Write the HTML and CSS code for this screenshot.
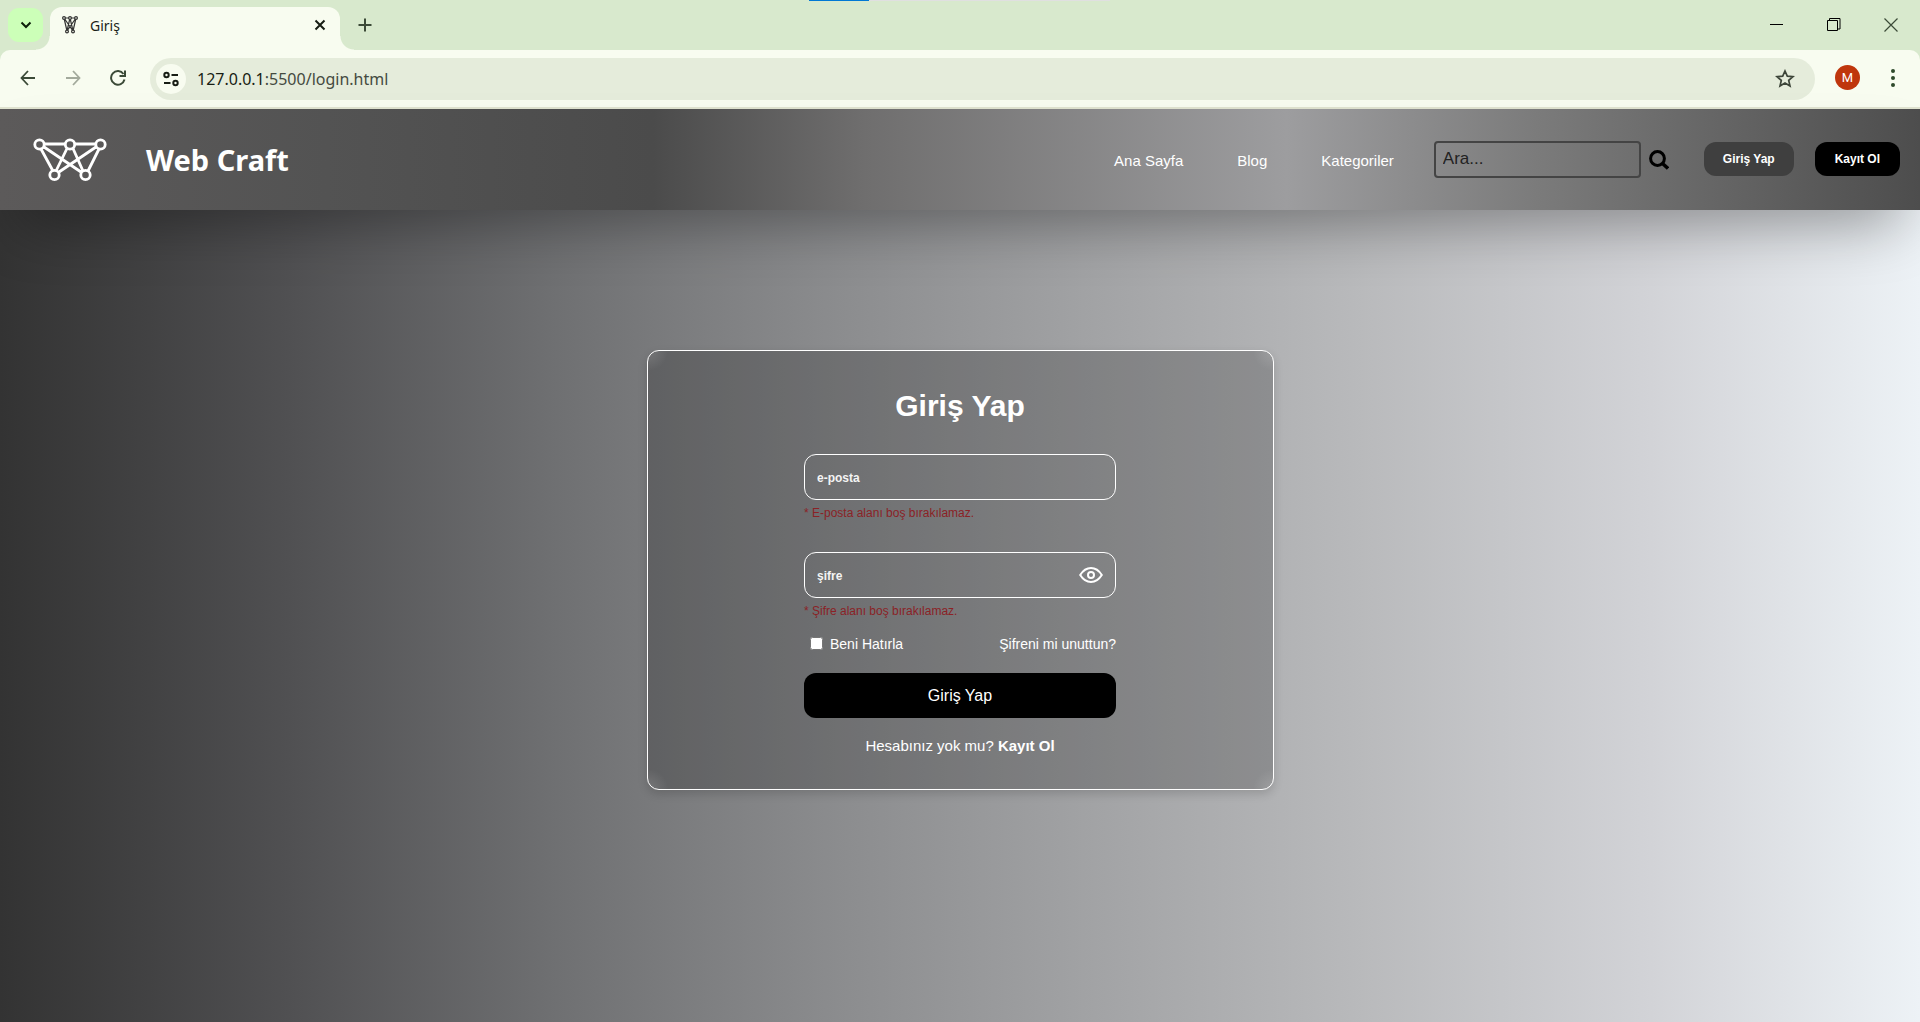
FILE: index.html
```html
<!DOCTYPE html>
<html lang="tr">
<head>
<meta charset="utf-8">
<meta name="viewport" content="width=device-width, initial-scale=1">
<title>Giriş</title>
<link rel="stylesheet" href="styles.css">
</head>
<body>
<div class="browser">
  <div class="tabstrip">
    <div class="progress"><span class="progress-bar"></span></div>
    <button class="tab-search" aria-label="Sekmelerde ara">
      <svg width="12" height="12" viewBox="0 0 12 12" fill="none" stroke="#0d1f0a" stroke-width="2"><path d="M1.500 3.500 6 8l4.500-4.500"/></svg>
    </button>
    <div class="tab">
      <svg class="favicon" width="16" height="18" viewBox="0 0 16 18" fill="none" stroke="#333" stroke-width="1.200"><path d="M2 2h12M2 2l3 13M2 2l9 13M8 2 5 15M8 2l3 13M14 2 5 15M14 2l-3 13"/><g fill="#f8fcf0"><circle cx="2" cy="2" r="1.400"/><circle cx="8" cy="2" r="1.400"/><circle cx="14" cy="2" r="1.400"/><circle cx="5" cy="15.500" r="1.400"/><circle cx="11" cy="15.500" r="1.400"/></g></svg>
      <span class="tab-title">Giriş</span>
      <button class="icon-button" aria-label="Sekmeyi kapat">
        <svg width="12" height="12" viewBox="0 0 12 12" stroke="#171d14" stroke-width="2"><path d="m1.500 1.500 9 9m0-9-9 9"/></svg>
      </button>
    </div>
    <button class="icon-button new-tab" aria-label="Yeni sekme">
      <svg width="14" height="14" viewBox="0 0 14 14" stroke="#3b4a37" stroke-width="2"><path d="M7 .5v13M.5 7h13"/></svg>
    </button>
    <div class="window-controls">
      <button class="icon-button" aria-label="Simge durumuna küçült"><svg width="14" height="14" viewBox="0 0 14 14" stroke="#000"><path d="M0 6.500h13"/></svg></button>
      <button class="icon-button" aria-label="Önceki boyut"><svg width="14" height="14" viewBox="0 0 14 14" fill="none" stroke="#000"><path d="M.5 2.500h10v10H.5zM2.500 2.500v-2h10.500v10.500h-2.500"/></svg></button>
      <button class="icon-button" aria-label="Kapat"><svg width="14" height="14" viewBox="0 0 14 14" stroke="#3b4a37" stroke-width="1.200"><path d="m.5.5 13 13m0-13-13 13"/></svg></button>
    </div>
  </div>
  <div class="toolbar">
    <div class="toolbar-nav">
      <button class="icon-button" aria-label="Geri"><svg width="16" height="16" viewBox="0 0 16 16" fill="none" stroke="#3b4a37" stroke-width="1.800"><path d="M15 8H2M8 1 1.500 8 8 15"/></svg></button>
      <button class="icon-button" aria-label="İleri"><svg width="16" height="16" viewBox="0 0 16 16" fill="none" stroke="#a3aa9c" stroke-width="1.800"><path d="M1 8h13M8 1l6.500 7L8 15"/></svg></button>
      <button class="icon-button" aria-label="Yenile"><svg width="16" height="16" viewBox="0 0 16 16" fill="none" stroke="#3b4a37" stroke-width="2"><path d="M14.500 9.500A6.800 6.800 0 1 1 13.500 4"/><path d="M15 .5v5.500H9.500"/></svg></button>
    </div>
    <div class="omnibox">
      <button class="site-info" aria-label="Site bilgileri"><svg width="16" height="16" viewBox="0 0 16 16" fill="none" stroke="#171d14" stroke-width="2"><circle cx="3.500" cy="4" r="2.200"/><path d="M8.500 4H15M1 12h6.500"/><circle cx="12.500" cy="12" r="2.200"/></svg></button>
      <p class="url"><span class="url-host">127.0.0.1</span>:5500/login.html</p>
      <button class="icon-button" aria-label="Yer işareti ekle"><svg width="20" height="19" viewBox="0 0 20 19" fill="none" stroke="#3d4539" stroke-width="1.700"><path d="m10 2 2.300 5.200 5.700.5-4.300 3.700 1.300 5.600-5-3-5 3 1.300-5.600L2 7.700l5.700-.5z"/></svg></button>
    </div>
    <button class="avatar" aria-label="Profil">M</button>
    <button class="icon-button" aria-label="Menü"><svg width="6" height="20" viewBox="0 0 6 20" fill="#2f4a2b"><circle cx="3" cy="3" r="2"/><circle cx="3" cy="10" r="2"/><circle cx="3" cy="17" r="2"/></svg></button>
  </div>
</div>

<div class="page">
  <header class="site-header">
    <a class="brand" href="#">
      <svg width="74" height="44" viewBox="0 0 74 44" fill="none" stroke="#fff" stroke-width="2.800"><path d="M12 6h20M42 6h20M8 11l12 22M11 9l37 25M34 10.500 23 33M40 10.500 50 33M63 9 26 34M66 11 55 33"/><circle cx="6.500" cy="6.500" r="4.700"/><circle cx="37" cy="6.500" r="4.700"/><circle cx="67.500" cy="6.500" r="4.700"/><circle cx="21.500" cy="37" r="4.700"/><circle cx="52.500" cy="37" r="4.700"/></svg>
      <span class="brand-name">Web Craft</span>
    </a>
    <nav class="site-nav">
      <a href="#">Ana Sayfa</a>
      <a href="#">Blog</a>
      <a href="#">Kategoriler</a>
    </nav>
    <form class="search">
      <input class="search-input" type="search" placeholder="Ara..." aria-label="Ara">
      <button class="icon-button" type="button" aria-label="Aramayı başlat"><svg width="20" height="20" viewBox="0 0 20 20" fill="none" stroke="#000"><circle cx="8.500" cy="8.500" r="6.900" stroke-width="3"/><path d="m13.500 13.500 5.500 5" stroke-width="3.500"/></svg></button>
    </form>
    <div class="account">
      <button class="pill">Giriş Yap</button>
      <button class="pill pill-dark">Kayıt Ol</button>
    </div>
  </header>

  <main class="login-area">
    <section class="card">
      <form class="login-form" novalidate>
        <h1 class="title">Giriş Yap</h1>
        <div class="field">
          <div class="input-box"><input type="email" placeholder="e-posta" aria-label="e-posta"></div>
          <p class="error">* E-posta alanı boş bırakılamaz.</p>
        </div>
        <div class="field">
          <div class="input-box">
            <input type="password" placeholder="şifre" aria-label="şifre">
            <button class="icon-button" type="button" aria-label="Şifreyi göster"><svg width="24" height="18" viewBox="0 0 24 18" fill="none" stroke="#fff" stroke-width="2"><path d="M1.200 9C4 4.500 7.500 2 12 2s8 2.500 10.800 7C20 13.500 16.500 16 12 16S4 13.500 1.200 9z"/><circle cx="12" cy="9" r="3"/></svg></button>
          </div>
          <p class="error">* Şifre alanı boş bırakılamaz.</p>
        </div>
        <div class="options">
          <label class="remember"><input type="checkbox">Beni Hatırla</label>
          <a href="#">Şifreni mi unuttun?</a>
        </div>
        <button class="submit" type="button">Giriş Yap</button>
        <p class="signup">Hesabınız yok mu? <a href="#">Kayıt Ol</a></p>
      </form>
    </section>
  </main>
</div>
</body>
</html>
```
FILE: styles.css
```css
* {
  box-sizing: border-box;
  margin: 0;
}

body {
  min-height: 100vh;
  display: flex;
  flex-direction: column;
  font-family: "Liberation Sans", Arial, sans-serif;
  color: #fff;
}

a {
  color: inherit;
  text-decoration: none;
}

button {
  border: 0;
  padding: 0;
  color: inherit;
  font-family: inherit;
  cursor: pointer;
}

svg {
  display: block;
}

.icon-button {
  background: none;
  display: flex;
}

/* Browser frame */
.browser {
  background: #d8e9cd;
  color: #1b1f18;
  font-family: "Noto Sans", sans-serif;
}

.tabstrip {
  position: relative;
  display: flex;
  align-items: center;
  height: 50px;
  padding: 0 23px 0 8px;
}

.progress {
  position: absolute;
  top: 0;
  left: calc(50% - 151px);
  width: 301px;
  height: 1px;
  background: #e0e0e0;
}

.progress-bar {
  display: block;
  width: 60px;
  height: 1px;
  background: #0078d4;
}

.tab-search {
  display: grid;
  place-items: center;
  width: 35px;
  height: 34px;
  border-radius: 11px;
  background: #ccffb8;
}

.tab {
  position: relative;
  align-self: flex-end;
  display: flex;
  align-items: center;
  gap: 12px;
  width: 290px;
  height: 43px;
  margin-left: 7px;
  padding: 0 14px 7px 12px;
  border-radius: 12px 12px 0 0;
  background: #f8fcf0;
}

.tab::before,
.tab::after {
  content: "";
  position: absolute;
  bottom: 0;
  width: 14px;
  height: 14px;
}

.tab::before {
  right: 100%;
  background: radial-gradient(circle at 0 0, transparent 13px, #f8fcf0 14px);
}

.tab::after {
  left: 100%;
  background: radial-gradient(circle at 100% 0, transparent 13px, #f8fcf0 14px);
}

.tab-title {
  flex: 1;
  font-size: 14px;
}

.new-tab {
  margin-left: 18px;
}

.window-controls {
  display: flex;
  gap: 43px;
  margin-left: auto;
  margin-right: -1px;
}

.toolbar {
  display: flex;
  align-items: center;
  height: 59px;
  padding: 0 24px 2px 20px;
  border-bottom: 2px solid #e0e3d0;
  border-radius: 10px 10px 0 0;
  background: #f8fcf0;
}

.toolbar-nav {
  display: flex;
  gap: 29px;
}

.omnibox {
  flex: 1;
  display: flex;
  align-items: center;
  height: 42px;
  margin: 2px 20px 0 24px;
  padding: 0 20px 0 6px;
  border-radius: 21px;
  background: #e5ecdb;
}

.site-info {
  display: grid;
  place-items: center;
  width: 30px;
  height: 30px;
  border-radius: 50%;
  background: #f8fcf0;
}

.url {
  flex: 1;
  margin-left: 11px;
  font-size: 16px;
  color: #444a40;
}

.url-host {
  color: #171d14;
}

.avatar {
  width: 25px;
  height: 25px;
  margin-right: 30px;
  border-radius: 50%;
  background: #bf360c;
  color: #fff;
  font-family: Roboto, sans-serif;
  font-size: 13px;
}

/* Site */
.page {
  flex: 1;
  display: flex;
  flex-direction: column;
  background: linear-gradient(to right, #333 0%, #505052 15%, #6f7072 29%, #8a8b8d 43%, #a2a3a5 57%, #b9babc 71%, #d2d3d7 86%, #edf2f6 100%);
}

.site-header {
  display: flex;
  align-items: center;
  height: 101px;
  padding: 0 20px 0 33px;
  background: linear-gradient(to right, #5c5a5a 0%, #535353 17%, #4b4b4b 34%, #6f6e6e 45%, #9d9d9f 67%, #7b7b7b 80%, #4d4d4d 100%);
  box-shadow: 0 30px 60px -20px rgba(0, 0, 0, 0.4);
}

.brand {
  display: flex;
  align-items: center;
  gap: 39px;
}

.brand-name {
  font-family: "Noto Sans", sans-serif;
  font-size: 29px;
  font-weight: 700;
}

.site-nav {
  display: flex;
  gap: 54px;
  margin-left: auto;
  padding-top: 2px;
  font-size: 15px;
}

.search {
  display: flex;
  align-items: center;
  gap: 8px;
  margin: 0 35px 0 40px;
}

.search-input {
  width: 207px;
  height: 37px;
  padding: 0 7px 2px;
  border: 2px solid #444;
  border-radius: 4px;
  background: none;
  font: 17px "Liberation Sans", Arial, sans-serif;
}

.search-input::placeholder {
  color: #222;
}

.account {
  display: flex;
  gap: 21px;
}

.pill {
  height: 34px;
  margin-bottom: 2px;
  padding: 0 19px;
  border-radius: 12px;
  background: #3f3f3f;
  font-size: 12px;
  font-weight: 700;
}

.pill-dark {
  padding: 0 20px;
  background: #000;
}

.login-area {
  display: flex;
  justify-content: center;
  padding: 140px 20px;
}

.card {
  display: flex;
  justify-content: center;
  width: 627px;
  padding: 37px 20px 33px;
  border: 1px solid #fff;
  border-radius: 12px;
  background:
    radial-gradient(circle at 0 0, rgba(255, 255, 255, 0.15), transparent 20px),
    radial-gradient(circle at 100% 0, rgba(255, 255, 255, 0.15), transparent 20px),
    radial-gradient(circle at 0 100%, rgba(255, 255, 255, 0.15), transparent 20px),
    radial-gradient(circle at 100% 100%, rgba(255, 255, 255, 0.15), transparent 20px),
    rgba(0, 0, 0, 0.2);
  box-shadow: 0 4px 10px rgba(0, 0, 0, 0.15);
}

.login-form {
  width: 312px;
}

.title {
  margin-bottom: 30px;
  font-size: 30px;
  line-height: 36px;
  text-align: center;
}

.field {
  height: 98px;
}

.field + .field {
  height: 84px;
}

.input-box {
  display: flex;
  align-items: center;
  height: 46px;
  padding: 0 12px;
  border: 1px solid #fff;
  border-radius: 12px;
}

.input-box input {
  flex: 1;
  min-width: 0;
  border: 0;
  padding: 2px 0 0;
  background: none;
  color: #fff;
  font: 700 12px "Liberation Sans", Arial, sans-serif;
}

.input-box input::placeholder {
  color: #f4f4f4;
}

.error {
  margin-top: 4px;
  font-size: 12px;
  line-height: 18px;
  color: #8b2226;
}

.options {
  display: flex;
  justify-content: space-between;
  align-items: center;
  height: 16px;
  font-size: 14px;
}

.remember {
  display: flex;
  align-items: center;
  gap: 7px;
  padding-left: 6px;
}

.remember input {
  width: 13px;
  height: 13px;
  margin: 0 0 2px;
}

.submit {
  width: 100%;
  height: 45px;
  margin: 21px 0 18px;
  border-radius: 12px;
  background: #000;
  font-size: 16px;
}

.signup {
  font-size: 15px;
  line-height: 20px;
  text-align: center;
}

.signup a {
  font-weight: 700;
}
```
